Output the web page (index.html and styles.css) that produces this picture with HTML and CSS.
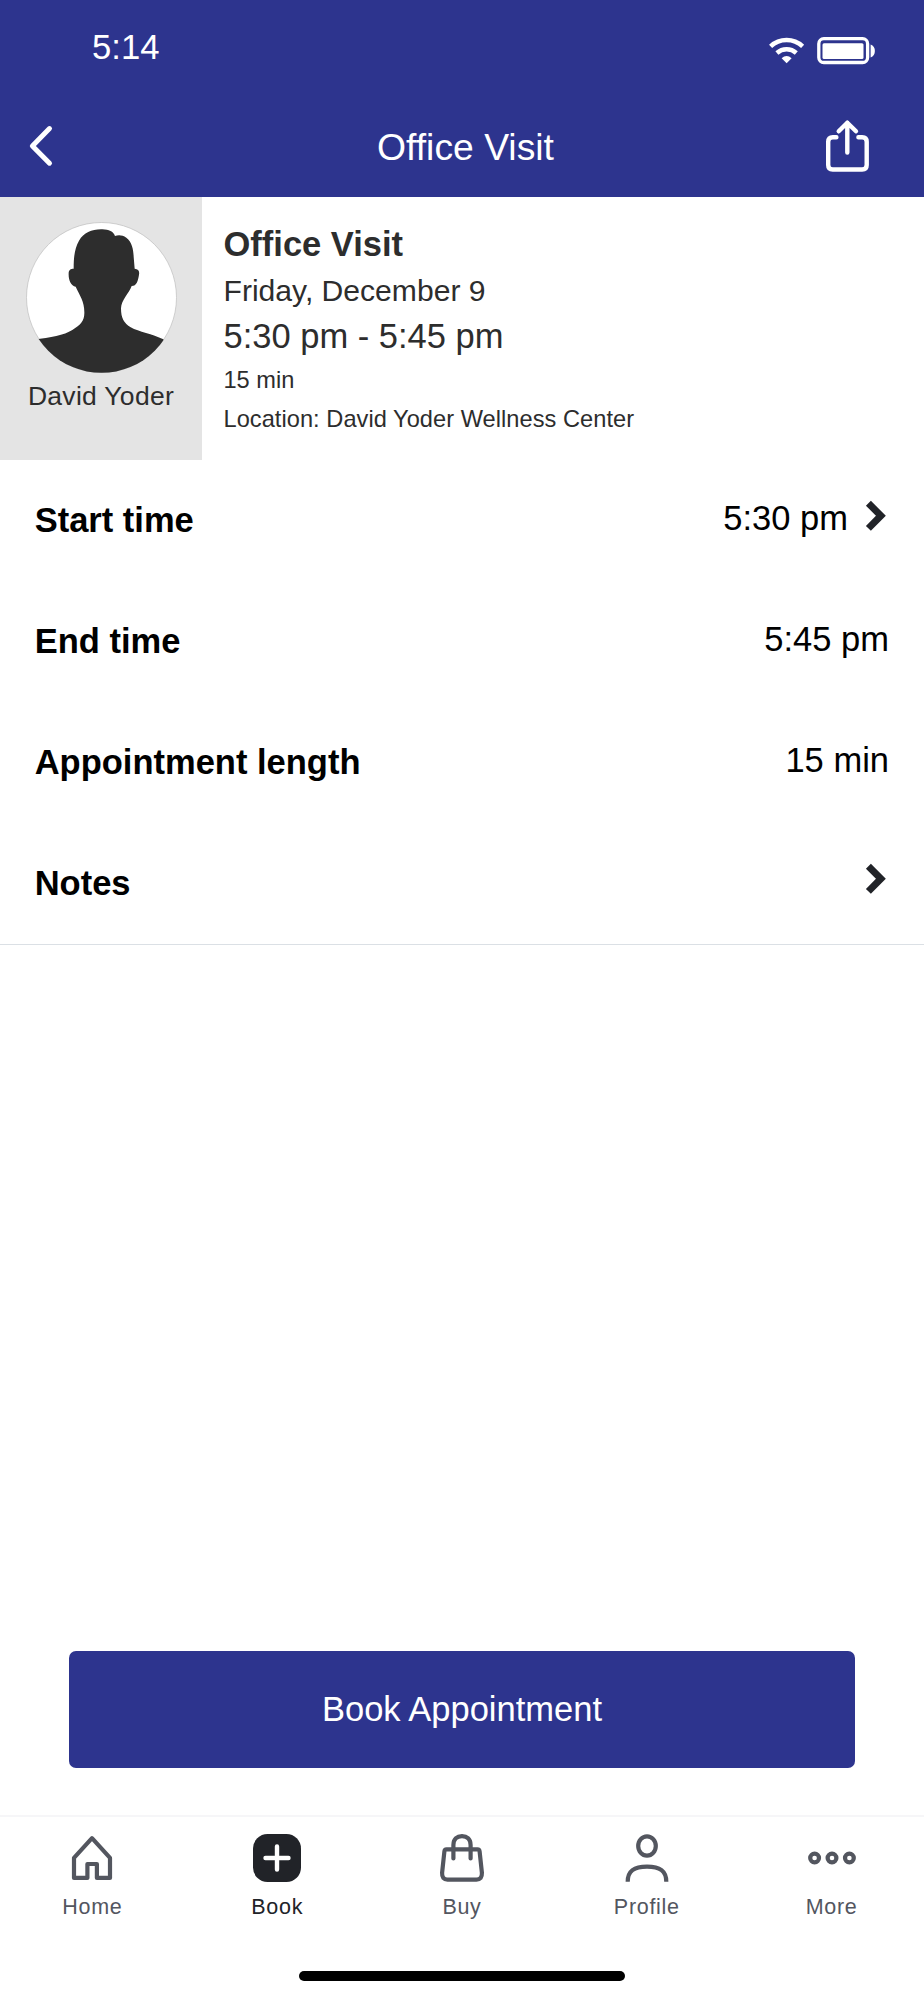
FILE: index.html
```html
<!DOCTYPE html>
<html lang="en">
<head>
    <meta charset="UTF-8">
    <meta name="viewport" content="width=device-width, initial-scale=1.0">
    <title>Office Visit</title>
    <link rel="stylesheet" href="styles.css">
</head>
<body>

    <!-- Status bar and page header -->
    <header class="header">
        <div class="status-bar">
            <span class="clock">5:14</span>
            <div class="status-icons">
                <svg class="wifi" width="36" height="28" viewBox="0 0 36 28" fill="none" stroke="#fff" stroke-width="4.5">
                    <path d="M1.6 9.3A23.5 23.5 0 0 1 33.6 9.3"/>
                    <path d="M7.9 16A14.6 14.6 0 0 1 27.3 16"/>
                    <path d="M12.6 21.2Q17.6 16.8 22.6 21.2L17.6 26.3Z" fill="#fff" stroke="none"/>
                </svg>
                <svg width="60" height="28" viewBox="0 0 60 28">
                    <rect x="1.8" y="1.7" width="48.8" height="23.8" rx="5" fill="none" stroke="#fff" stroke-width="3.3"/>
                    <rect x="5.5" y="6.2" width="41" height="15.8" rx="1.5" fill="#fff"/>
                    <path d="M53.6 7.5Q57.9 9 57.9 14T53.6 20.4Z" fill="#fff"/>
                </svg>
            </div>
        </div>
        <div class="title-bar">
            <svg width="26" height="42" viewBox="0 0 26 42" fill="none" stroke="#fff" stroke-width="5" stroke-linecap="round" stroke-linejoin="round">
                <path d="M21.5 3.6L4.4 21L21.5 38.2"/>
            </svg>
            <h1>Office Visit</h1>
            <svg width="45" height="54" viewBox="0 0 45 54" fill="none" stroke="#fff" stroke-width="4.4" stroke-linecap="round" stroke-linejoin="round">
                <path d="M11.4 18.3H7.7Q3.2 18.3 3.2 22.8V46Q3.2 50.5 7.7 50.5H37.2Q41.7 50.5 41.7 46V22.8Q41.7 18.3 37.2 18.3H33.4"/>
                <path d="M22.3 33.6V3.7M13.7 12.3L22.3 3.7L31 12.3"/>
            </svg>
        </div>
    </header>

    <!-- Appointment summary -->
    <section class="summary">
        <div class="provider">
            <svg class="avatar" width="151" height="151" viewBox="76 96 453 453">
                <clipPath id="face"><circle cx="302.5" cy="322.5" r="226"/></clipPath>
                <circle cx="302.5" cy="322.5" r="225" fill="#fff" stroke="#bbb" stroke-width="2"/>
                <path clip-path="url(#face)" fill="#2d2d2d" d="M100 449C150 442 190 436 215 420C240 405 251 392 251 370C252 335 238 318 225 290C210 288 203 268 204 250C204 240 210 236 219 236C219 200 222 175 235 152C250 127 275 117 305 118C325 119 338 124 343 138C352 134 365 134 377 143C395 157 398 180 399 200L402 236C413 237 417 242 415 254C412 272 408 288 393 288C385 310 362 330 361 355C361 385 370 400 390 412C415 426 455 432 488 448L530 560H76Z"/>
            </svg>
            <div class="provider-name">David Yoder</div>
        </div>
        <div class="visit">
            <h2>Office Visit</h2>
            <p class="date">Friday, December 9</p>
            <p class="time">5:30 pm - 5:45 pm</p>
            <p class="duration">15 min</p>
            <p class="location">Location: David Yoder Wellness Center</p>
        </div>
    </section>

    <!-- Appointment details -->
    <ul class="details">
        <li>
            <span class="label">Start time</span>
            <span class="value">5:30 pm</span>
            <svg class="chevron" width="22" height="32" viewBox="0 0 22 32"><path d="M3.4 3.2L15.9 15.8L3.4 28.4"/></svg>
        </li>
        <li>
            <span class="label">End time</span>
            <span class="value">5:45 pm</span>
        </li>
        <li>
            <span class="label">Appointment length</span>
            <span class="value">15 min</span>
        </li>
        <li>
            <span class="label">Notes</span>
            <svg class="chevron" width="22" height="32" viewBox="0 0 22 32"><path d="M3.4 3.2L15.9 15.8L3.4 28.4"/></svg>
        </li>
    </ul>

    <button class="book-button">Book Appointment</button>

    <!-- Bottom navigation -->
    <nav class="tabs">
        <a class="tab">
            <svg width="48" height="48" viewBox="0 0 48 48"><path d="M24 4.2L42 23.8V43.9H28.9V30H19.4V43.9H6V23.8Z"/></svg>
            <span>Home</span>
        </a>
        <a class="tab active">
            <svg width="48" height="48" viewBox="0 0 48 48">
                <rect width="48" height="48" rx="14.5" fill="#212328" stroke="none"/>
                <path d="M24 12.5V35.5M12.5 24H35.5" stroke="#fff" stroke-width="4.4"/>
            </svg>
            <span>Book</span>
        </a>
        <a class="tab">
            <svg width="48" height="48" viewBox="0 0 48 48">
                <path d="M8.5 15.4H39.5Q41.4 15.4 41.6 17.4L43.9 38.8Q44.2 45.6 38.5 45.6H9.5Q3.8 45.6 4.1 38.8L6.4 17.4Q6.6 15.4 8.5 15.4Z"/>
                <path d="M15.4 24.5V11C15.4 5 19 2.1 24 2.1S32.6 5 32.6 11V24.5"/>
            </svg>
            <span>Buy</span>
        </a>
        <a class="tab">
            <svg width="48" height="48" viewBox="0 0 48 48">
                <ellipse cx="24" cy="12" rx="8.8" ry="9.7"/>
                <path stroke-linecap="butt" d="M4.7 47.7C4.7 37 11 32.6 24 32.6S43.3 37 43.3 47.7"/>
            </svg>
            <span>Profile</span>
        </a>
        <a class="tab">
            <svg width="48" height="48" viewBox="0 0 48 48">
                <circle cx="6.6" cy="24" r="4.4"/>
                <circle cx="24" cy="24" r="4.4"/>
                <circle cx="41.4" cy="24" r="4.4"/>
            </svg>
            <span>More</span>
        </a>
    </nav>
    <div class="home-indicator"></div>

</body>
</html>
```
FILE: styles.css
```css
* {
    box-sizing: border-box;
}

body {
    font-family: "Liberation Sans", Arial, sans-serif;
    font-size: 34.5px;
    background-color: #fff;
    color: #000;
    display: flex;
    flex-direction: column;
    width: 924px;
    height: 2000px;
    margin: 0;
    overflow: hidden;
}

h1, h2, p, ul {
    margin: 0;
    padding: 0;
}

/* Header */
.header {
    height: 196.5px;
    background: #2d348e;
    color: #fff;
}

.status-bar {
    display: flex;
    justify-content: space-between;
    height: 96px;
    padding: 27px 47px 0 92px;
}

.clock {
    font-size: 34.65px;
    line-height: 41px;
}

.status-icons {
    display: flex;
    gap: 12.5px;
    padding-top: 10px;
}

.title-bar {
    display: flex;
    align-items: center;
    justify-content: space-between;
    height: 100px;
    padding: 0 54px 0 28px;
}

.title-bar h1 {
    padding: 2px 0 0 52px;
    font-size: 37.3px;
    font-weight: normal;
}

/* Summary */
.summary {
    display: flex;
    height: 263.5px;
    color: #2d2d2d;
}

.provider {
    width: 202px;
    padding-top: 25px;
    background: #e4e4e4;
    text-align: center;
}

.avatar {
    display: block;
    margin: 0 auto;
}

.provider-name {
    font-size: 26.5px;
    line-height: 46px;
    letter-spacing: 0.3px;
}

.visit {
    padding: 23px 0 0 21.5px;
}

.visit h2 {
    font-size: 34.5px;
    line-height: 48px;
}

.date {
    font-size: 30.1px;
    line-height: 46px;
}

.time {
    line-height: 44px;
}

.duration {
    font-size: 23.6px;
    line-height: 44px;
}

.location {
    font-size: 23.6px;
    line-height: 34px;
    letter-spacing: 0.05px;
}

/* Detail rows */
.details {
    list-style: none;
    border-bottom: 1.5px solid #dbe0e5;
}

.details li {
    display: flex;
    align-items: center;
    height: 121px;
    padding: 0 35px 0 34.7px;
}

.label {
    flex: 1;
    font-weight: bold;
}

.value {
    padding-bottom: 4px;
}

.chevron {
    margin: 0 2px 9px 17px;
    fill: none;
    stroke: #212328;
    stroke-width: 7;
}

/* Book button */
.book-button {
    height: 117px;
    margin: auto 69px 47px;
    border: none;
    border-radius: 7px;
    background: #2d348e;
    color: #fff;
    font-family: inherit;
    font-size: 34.5px;
}

/* Tabs */
.tabs {
    display: flex;
    height: 156px;
    border-top: 2px solid #f6f6f8;
}

.tab {
    flex: 1;
    display: flex;
    flex-direction: column;
    align-items: center;
    padding-top: 16.5px;
    color: #53565f;
    font-size: 21.5px;
    line-height: 50px;
    letter-spacing: 0.7px;
}

.tab svg {
    fill: none;
    stroke: currentColor;
    stroke-width: 4.2;
    stroke-linecap: round;
    stroke-linejoin: round;
}

.tab.active {
    color: #212328;
}

.home-indicator {
    width: 326px;
    height: 10px;
    margin: 0 auto 19px;
    border-radius: 5px;
    background: #000;
}
```
